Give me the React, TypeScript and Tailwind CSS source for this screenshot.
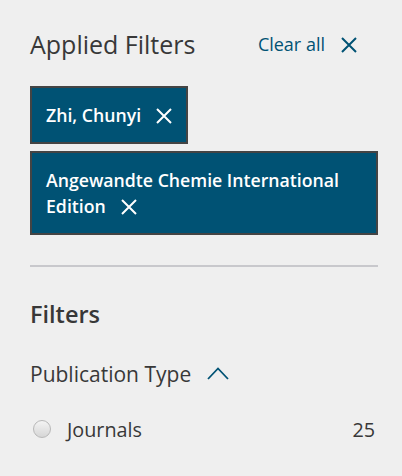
const font = { fontFamily: '"Open Sans", "Liberation Sans", sans-serif' }

function Cross({ className }: { className?: string }) {
  return (
    <svg viewBox="0 0 16 16" className={className} fill="none" stroke="currentColor" strokeWidth={2}>
      <path d="M1 1L15 15M15 1L1 15" />
    </svg>
  )
}

function Chip({ label }: { label: string }) {
  return (
    <div className="border-2 border-[#444] bg-[#005274] px-[14px] py-[14px] text-[17.7px] leading-[26px] font-semibold text-white">
      {label}
      <Cross className="ml-[15px] inline-block h-[16px] w-[16px] align-[-2px]" />
    </div>
  )
}

export default function App() {
  return (
    <div className="min-h-[476px] w-[402px] bg-[#efefef] pl-[30px] pr-[24px] pt-[28px] text-[#383838]" style={font}>
      <div className="flex items-center justify-between pr-[21px]">
        <h2 className="text-[25px] leading-[32px] font-medium">Applied Filters</h2>
        <button className="flex items-center gap-[16px] text-[18px] text-[#005274]">
          Clear all
          <Cross className="mt-[2px] h-[16px] w-[16px]" />
        </button>
      </div>

      <div className="mt-[26px] flex flex-col items-start gap-[7px]">
        <Chip label="Zhi, Chunyi" />
        <Chip label="Angewandte Chemie International Edition" />
      </div>

      <hr className="mt-[30px] border-t-2 border-[#c8c8cc]" />

      <h3 className="mt-[32px] text-[23.5px] leading-[30px] font-semibold">Filters</h3>

      <div className="mt-[30px] flex items-center gap-[16px] text-[21px]">
        Publication Type
        <svg viewBox="0 0 22 13" className="mt-[-2px] h-[13px] w-[22px] text-[#005274]" fill="none" stroke="currentColor" strokeWidth={1.8}>
          <path d="M1 12L11 1.5L21 12" />
        </svg>
      </div>

      <label className="mt-[24px] flex items-center text-[19.8px]">
        <span className="ml-[3px] h-[18px] w-[18px] rounded-full border border-[#b8b8b8] bg-gradient-to-b from-[#f4f4f4] to-[#d6d6d6]" />
        <span className="ml-[16px]">Journals</span>
        <span className="ml-auto pr-[3px]">25</span>
      </label>
    </div>
  )
}
